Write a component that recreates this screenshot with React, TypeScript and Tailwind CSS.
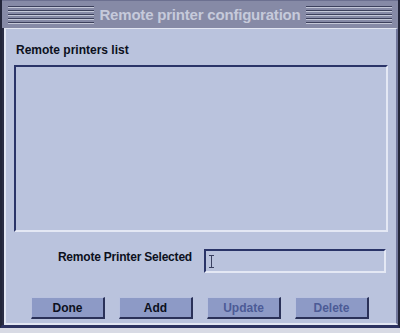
function Stripes() {
  return (
    <div className="flex flex-col gap-[2px]">
      {[0, 1, 2, 3, 4].map((i) => (
        <div key={i} className="h-[2px] border-t border-[#3c405c] border-b border-b-[#c4c8d8]" />
      ))}
    </div>
  );
}

function Button({ label, disabled }: { label: string; disabled?: boolean }) {
  return (
    <div
      className={
        "w-[74px] h-[22px] flex items-center justify-center bg-[#8d9ac6] border-t border-l border-t-[#b8c1de] border-l-[#b8c1de] border-b-2 border-r-2 border-b-[#2a3158] border-r-[#2a3158] text-[12px] font-bold " +
        (disabled ? "text-[#4c5b96]" : "text-[#0c1020]")
      }
    >
      {label}
    </div>
  );
}

export default function App() {
  return (
    <div className="w-[400px] h-[333px] bg-[#d8dae4] font-['Liberation_Sans',Arial,sans-serif] flex flex-col">
      <div className="h-[328px] flex flex-col bg-[#2a2d44] border-l-2 border-r-2 border-[#23263a] border-b-[3px] border-b-[#2c3260]">
        {/* title bar */}
        <div className="h-[28px] bg-[#868aa6] border-t border-[#6c7090] flex items-center gap-[5px] px-[6px]">
          <div className="flex-1 pt-[1px]">
            <Stripes />
          </div>
          <div className="text-[15px] font-bold text-[#c6cadb] tracking-[-0.2px] leading-none">
            Remote printer configuration
          </div>
          <div className="flex-1 pt-[1px]">
            <Stripes />
          </div>
        </div>
        {/* body */}
        <div className="flex-1 flex flex-col bg-[#bac3dd] border-l-2 border-t border-[#e2e6f2] border-r-2 border-r-[#70769a] border-b-2 border-b-[#e2e6f2] ml-[2px]">
          <div className="pl-[10px] pt-[15px] h-[36px] text-[12px] font-bold text-[#0c1020] leading-none">
            Remote printers list
          </div>
          <div className="mx-[8px] h-[167px] border-t-2 border-l-2 border-[#2a3468] border-b-2 border-r-2 border-b-[#e4e8f4] border-r-[#e4e8f4]" />
          <div className="mt-[17px] h-[24px] flex items-start">
            <div className="w-[186px] pt-[1px] text-right text-[12px] font-bold text-[#0c1020] leading-[14px] tracking-[-0.2px]">
              Remote Printer Selected
            </div>
            <div className="ml-[12px] w-[182px] h-[24px] border-t-2 border-l-2 border-[#2a3468] border-b-2 border-r-2 border-b-[#e4e8f4] border-r-[#e4e8f4] flex items-center pl-[3px]">
              <svg width="5" height="13" viewBox="0 0 5 13">
                <path d="M0 0.5h5M0 12.5h5M2.5 0v13" stroke="#3a4060" strokeWidth="1" />
              </svg>
            </div>
          </div>
          <div className="mt-[24px] flex gap-[14px] pl-[25px]">
            <Button label="Done" />
            <Button label="Add" />
            <Button label="Update" disabled />
            <Button label="Delete" disabled />
          </div>
        </div>
      </div>
    </div>
  );
}
